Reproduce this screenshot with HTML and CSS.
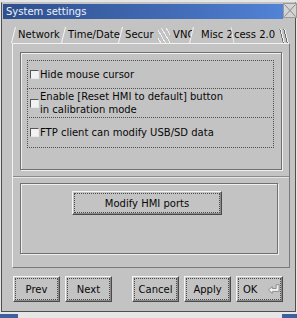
FILE: index.html
```html
<!DOCTYPE html>
<html lang="en">
<head>
  <meta charset="UTF-8">
  <title>System settings</title>
  <link rel="stylesheet" href="styles.css">
</head>
<body>
  <div class="window">
    <!-- Title bar -->
    <div class="titlebar">
      <div class="title">System settings</div>
      <div class="close">
        <svg width="14" height="15" viewBox="0 0 14 15">
          <path d="M1.5 1.5 L12.5 13.5 M12.5 1.5 L1.5 13.5" stroke="#8a8a8a" stroke-width="1" fill="none"/>
        </svg>
      </div>
    </div>

    <!-- Tabs -->
    <div class="tabbar">
      <span class="tab tab-network"><span>Network</span></span>
      <span class="tab tab-time"><span>Time/Date</span></span>
      <span class="tab tab-secur"><span>Secur</span></span>
      <span class="hatch"></span>
      <span class="tab tab-vnc"><span>VNC</span></span>
      <span class="tab tab-misc"><span>Misc 2</span></span>
      <span class="tab tab-access"><span>cess 2.0</span></span>
      <span class="scroll"></span>
    </div>

    <!-- Tab page -->
    <div class="pane">
      <div class="group group-checks">
        <label class="check">
          <span class="box"></span>
          <span class="label">Hide mouse cursor</span>
        </label>
        <label class="check">
          <span class="box"></span>
          <span class="label">Enable [Reset HMI to default] button<br>in calibration mode</span>
        </label>
        <label class="check">
          <span class="box"></span>
          <span class="label">FTP client can modify USB/SD data</span>
        </label>
      </div>
      <div class="separator"></div>
      <div class="group group-ports">
        <button class="btn btn-wide"><span>Modify HMI ports</span></button>
      </div>
    </div>

    <!-- Dialog buttons -->
    <div class="buttons">
      <button class="btn"><span>Prev</span></button>
      <button class="btn"><span>Next</span></button>
      <button class="btn btn-gap"><span>Cancel</span></button>
      <button class="btn"><span>Apply</span></button>
      <button class="btn btn-ok">
        <span>OK
          <svg class="enter" width="12" height="10" viewBox="0 0 12 10">
            <polygon points="0.5,6 4.5,2.5 4.5,4.5 8.5,4.5 8.5,0.5 11.5,0.5 11.5,7.5 4.5,7.5 4.5,9.5" fill="#f2f2f2" stroke="#8c8c8c" stroke-width="1"/>
          </svg>
        </span>
      </button>
    </div>
  </div>

  <div class="desktop">
    <span class="blue"></span>
    <span class="blue blue-right"></span>
  </div>
</body>
</html>
```

FILE: styles.css
```css
* {
  margin: 0;
  padding: 0;
  box-sizing: border-box;
}

body {
  width: 297px;
  height: 318px;
  overflow: hidden;
  background-color: #e6e6e6;
  font-family: "DejaVu Sans", sans-serif;
  font-size: 10px;
  color: #080808;
}

/* Window */
.window {
  margin: 2px 0 0 1px;
  width: 295px;
  height: 310px;
  background-color: #c3c3c3;
  border: 1px solid #4e4e4e;
  border-top-color: #c3c3c3;
}

.titlebar {
  display: flex;
  height: 16px;
}

.title {
  flex: 1;
  margin: 1px 0 0 1px;
  height: 15px;
  padding: 2px 0 0 3px;
  color: #eef2fa;
  background: linear-gradient(to right, #2f4f8d, #4570bd 70%, #5283d6);
  white-space: nowrap;
}

.close {
  width: 14px;
  height: 15px;
  margin-right: -2px;
  background-color: #d4d4d4;
  border: 1px solid #9a9a9a;
}

.close svg {
  display: block;
  margin: -1px;
}

/* Tabs */
.tabbar {
  display: flex;
  align-items: flex-end;
  height: 16px;
  margin: 8px 0 0 11px;
  white-space: nowrap;
}

.tab {
  display: block;
  flex: none;
  height: 16px;
  padding: 2px 0 0 4px;
  overflow: hidden;
  transform: skewX(-14deg);
  border-left: 1px solid #f4f4f4;
}

.tab > span {
  display: inline-block;
  transform: skewX(14deg);
}

.tab-network {
  width: 50px;
}

.tab-time {
  width: 57px;
}

.tab-secur {
  width: 37px;
}

.hatch {
  flex: none;
  width: 12px;
  height: 15px;
  margin: 0 2px 0 1px;
  background: repeating-linear-gradient(60deg, #c3c3c3 0 2px, #f0f0f0 2px 3px, #c3c3c3 3px 4px);
}

.tab-vnc {
  width: 20px;
  padding-left: 1px;
  border-left: none;
  border-right: 1px solid #f4f4f4;
}

.tab-misc {
  width: 36px;
  margin-left: 4px;
  padding-left: 5px;
  border-left: none;
}

.tab-access {
  width: 48px;
  padding-left: 1px;
  transform: skewX(10deg);
  border-left-color: #e8e8e8;
}

.tab-access > span {
  transform: skewX(-10deg);
}

.scroll {
  flex: none;
  width: 7px;
  height: 14px;
  margin-left: 1px;
  background: repeating-linear-gradient(to right, #6a6a6a 0 1px, #f0f0f0 1px 2px, transparent 2px 4px);
  transform: skewX(14deg);
}

/* Tab page */
.pane {
  width: 278px;
  height: 225px;
  margin-left: 10px;
  padding: 8px 7px 0 7px;
  border: 1px solid #7a7a7a;
  border-top-color: #f2f2f2;
  border-left-color: #f2f2f2;
}

.group {
  border: 1px solid #707070;
  box-shadow: 1px 1px 0 #f0f0f0, inset 1px 1px 0 #f0f0f0;
}

.group-checks {
  height: 118px;
  padding: 7px 7px 0 6px;
}

.check {
  display: flex;
  align-items: center;
  gap: 1px;
  padding-left: 2px;
  border: 1px dotted #505050;
  margin-top: -1px;
  line-height: 13px;
}

.check:nth-child(1) {
  height: 29px;
  margin-top: 0;
}

.check:nth-child(2) {
  height: 30px;
}

.check:nth-child(3) {
  height: 31px;
}

.box {
  flex: none;
  width: 9px;
  height: 9px;
  background-color: #f2f2f2;
  border: 1px solid #555;
  border-right-color: #e8e8e8;
  border-bottom-color: #e8e8e8;
}

.separator {
  height: 2px;
  margin: 6px -7px 0 -7px;
  border-top: 1px solid #8a8a8a;
  border-bottom: 1px solid #e6e6e6;
}

.group-ports {
  height: 71px;
  margin-top: 5px;
  margin-right: 4px;
  padding: 7px 0 0 51px;
}

/* Buttons */
.btn {
  display: inline-block;
  height: 26px;
  width: 47px;
  padding: 1px;
  font: inherit;
  color: inherit;
  background-color: #c3c3c3;
  border: 1px solid #4a4a4a;
  border-top-color: #f4f4f4;
  border-left-color: #f4f4f4;
  box-shadow: inset -1px -1px 0 #8a8a8a;
}

.btn > span {
  display: flex;
  align-items: center;
  justify-content: center;
  height: 100%;
  border: 1px dotted #4a4a4a;
}

.btn-wide {
  width: 150px;
  height: 24px;
}

.buttons {
  display: flex;
  gap: 5px;
  margin: 8px 0 0 11px;
}

.btn-gap {
  margin-left: 15px;
}

.btn-ok > span {
  justify-content: flex-start;
  padding-left: 4px;
}

.enter {
  margin-left: 11px;
}

/* Desktop strip below the window */
.desktop {
  display: flex;
  justify-content: space-between;
  height: 4px;
  margin-top: 2px;
}

.blue {
  width: 18px;
  background-color: #3f5f9f;
}

.blue-right {
  width: 15px;
}
```
